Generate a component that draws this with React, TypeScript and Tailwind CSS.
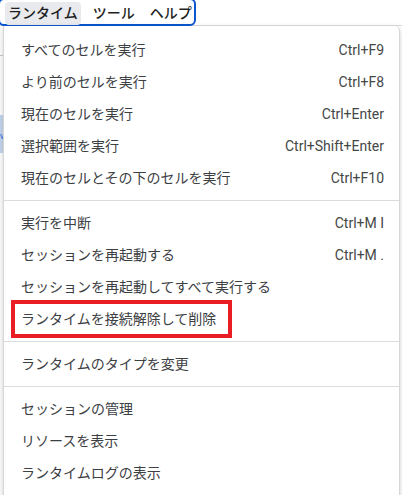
import React from "react";

type Item = { label: string; shortcut?: string; highlight?: boolean };

const groups: Item[][] = [
  [
    { label: "すべてのセルを実行", shortcut: "Ctrl+F9" },
    { label: "より前のセルを実行", shortcut: "Ctrl+F8" },
    { label: "現在のセルを実行", shortcut: "Ctrl+Enter" },
    { label: "選択範囲を実行", shortcut: "Ctrl+Shift+Enter" },
    { label: "現在のセルとその下のセルを実行", shortcut: "Ctrl+F10" },
  ],
  [
    { label: "実行を中断", shortcut: "Ctrl+M I" },
    { label: "セッションを再起動する", shortcut: "Ctrl+M ." },
    { label: "セッションを再起動してすべて実行する" },
    { label: "ランタイムを接続解除して削除", highlight: true },
  ],
  [{ label: "ランタイムのタイプを変更" }],
  [
    { label: "セッションの管理" },
    { label: "リソースを表示" },
    { label: "ランタイムログの表示" },
  ],
];

export default function App() {
  return (
    <div
      className="relative w-[402px] h-[495px] overflow-hidden bg-white"
      style={{ fontFamily: '"Roboto", "Noto Sans CJK JP", sans-serif' }}
    >
      {/* top bar */}
      <div className="h-[26px] border-b border-[#dadce0] bg-white flex items-start">
        <div className="relative -ml-[2px] -mt-[2px] h-[28px] w-[198px] shrink-0 rounded-md border-2 border-[#0b57d0] flex items-start pt-[2px] pl-[5px] gap-[9px] text-[14px] leading-[23px] font-medium text-[#1f1f1f] whitespace-nowrap">
          <div className="shrink-0 h-[23px] px-[3px] rounded-[4px] bg-[#e8eaed]">ランタイム</div>
          <div className="shrink-0 h-[23px] px-[3px]">ツール</div>
          <div className="shrink-0 h-[23px] px-[3px]">ヘルプ</div>
        </div>
      </div>
      {/* page behind */}
      <div className="absolute left-0 top-[55px] w-[10px] h-px bg-[#c8c8c8]" />
      <div className="absolute left-0 top-[115px] w-[10px] h-[38px] bg-[#c5d6ef]" />
      <div className="absolute left-0 top-[132px] text-[9px] leading-none text-[#1a73e8]">v</div>

      {/* dropdown menu */}
      <div className="absolute left-[3px] top-[26px] w-[397px] h-[480px] bg-white rounded-tr-[5px] border-l border-r border-[#d6d6d6] shadow-[0_2px_6px_rgba(0,0,0,0.18)] pt-[8px]">
        {groups.map((g, gi) => (
          <div key={gi}>
            {gi > 0 && <div className="my-[6px] h-px bg-[#dadce0]" />}
            {g.map((it) => (
              <div
                key={it.label}
                className="relative h-[32px] flex items-center justify-between pl-[17px] pr-[15px] text-[14px] text-[#3c4043] whitespace-nowrap"
              >
                <span>{it.label}</span>
                {it.shortcut && <span className="text-[#444746]">{it.shortcut}</span>}
                {it.highlight && (
                  <div className="absolute left-[7px] top-[-3px] w-[221px] h-[38px] border-4 border-[#ea1c24]" />
                )}
              </div>
            ))}
          </div>
        ))}
      </div>
    </div>
  );
}
